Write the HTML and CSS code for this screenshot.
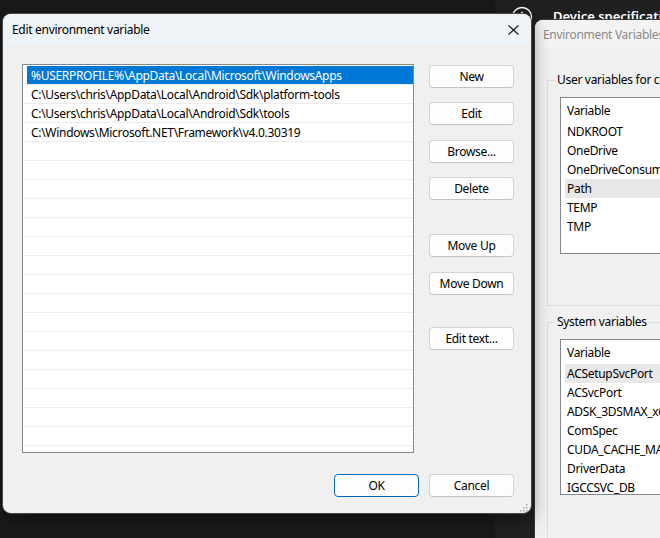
FILE: index.html
```html
<!DOCTYPE html>
<html>
<head>
<meta charset="utf-8">
<link rel="stylesheet" href="styles.css">
</head>
<body>
<div class="desk">
  <div class="bg-panel"></div>
  <svg class="info-icon" width="22" height="22" viewBox="0 0 22 22">
    <circle cx="11" cy="11" r="9.5" fill="none" stroke="#ffffff" stroke-width="1.4"/>
    <circle cx="11" cy="6.8" r="1.1" fill="#ffffff"/>
    <line x1="11" y1="10" x2="11" y2="16" stroke="#ffffff" stroke-width="1.4"/>
  </svg>
  <div class="bg-heading">Device specifications</div>

  <div class="env">
    <div class="env-title">Environment Variables</div>
    <div class="env-body">
      <fieldset class="group group-user">
        <legend>User variables for chris</legend>
        <div class="vlist vlist-user">
          <div class="vhead">Variable</div>
          <div class="vrow">NDKROOT</div>
          <div class="vrow">OneDrive</div>
          <div class="vrow">OneDriveConsumer</div>
          <div class="vrow hl">Path</div>
          <div class="vrow">TEMP</div>
          <div class="vrow">TMP</div>
        </div>
      </fieldset>
      <fieldset class="group group-sys">
        <legend>System variables</legend>
        <div class="vlist vlist-sys">
          <div class="vhead">Variable</div>
          <div class="vrow hl">ACSetupSvcPort</div>
          <div class="vrow">ACSvcPort</div>
          <div class="vrow">ADSK_3DSMAX_x64_2023</div>
          <div class="vrow">ComSpec</div>
          <div class="vrow">CUDA_CACHE_MAXSIZE</div>
          <div class="vrow">DriverData</div>
          <div class="vrow">IGCCSVC_DB</div>
        </div>
      </fieldset>
    </div>
  </div>

  <div class="dlg">
    <div class="dlg-title">
      <span>Edit environment variable</span>
      <svg class="close" width="11" height="10" viewBox="0 0 11 10">
        <line x1="0.5" y1="0.5" x2="10.5" y2="9.5" stroke="#1a1a1a" stroke-width="1.1"/>
        <line x1="10.5" y1="0.5" x2="0.5" y2="9.5" stroke="#1a1a1a" stroke-width="1.1"/>
      </svg>
    </div>
    <div class="dlg-body">
      <div class="plist">
        <div class="prow sel"><span class="cell">%USERPROFILE%\AppData\Local\Microsoft\WindowsApps</span></div>
        <div class="prow"><span class="cell">C:\Users\chris\AppData\Local\Android\Sdk\platform-tools</span></div>
        <div class="prow"><span class="cell">C:\Users\chris\AppData\Local\Android\Sdk\tools</span></div>
        <div class="prow"><span class="cell">C:\Windows\Microsoft.NET\Framework\v4.0.30319</span></div>
        <div class="prow"><span class="cell"></span></div>
        <div class="prow"><span class="cell"></span></div>
        <div class="prow"><span class="cell"></span></div>
        <div class="prow"><span class="cell"></span></div>
        <div class="prow"><span class="cell"></span></div>
        <div class="prow"><span class="cell"></span></div>
        <div class="prow"><span class="cell"></span></div>
        <div class="prow"><span class="cell"></span></div>
        <div class="prow"><span class="cell"></span></div>
        <div class="prow"><span class="cell"></span></div>
        <div class="prow"><span class="cell"></span></div>
        <div class="prow"><span class="cell"></span></div>
        <div class="prow"><span class="cell"></span></div>
        <div class="prow"><span class="cell"></span></div>
        <div class="prow"><span class="cell"></span></div>
        <div class="prow"><span class="cell"></span></div>
      </div>
      <div class="btn-col">
        <button class="btn">New</button>
        <button class="btn sp14">Edit</button>
        <button class="btn sp15">Browse...</button>
        <button class="btn sp14">Delete</button>
        <button class="btn sp34">Move Up</button>
        <button class="btn sp15">Move Down</button>
        <button class="btn sp32">Edit text...</button>
      </div>
    </div>
    <div class="dlg-foot">
      <button class="btn btn-primary">OK</button>
      <button class="btn">Cancel</button>
    </div>
    <svg class="grip" width="9" height="9" viewBox="0 0 9 9">
      <rect x="7" y="1" width="1.5" height="1.5" fill="#a6a6a6"/>
      <rect x="4" y="4" width="1.5" height="1.5" fill="#a6a6a6"/>
      <rect x="7" y="4" width="1.5" height="1.5" fill="#a6a6a6"/>
      <rect x="1" y="7" width="1.5" height="1.5" fill="#a6a6a6"/>
      <rect x="4" y="7" width="1.5" height="1.5" fill="#a6a6a6"/>
      <rect x="7" y="7" width="1.5" height="1.5" fill="#a6a6a6"/>
    </svg>
  </div>
</div>
</body>
</html>
```

FILE: styles.css
```css
* { box-sizing: border-box; }

html, body {
  margin: 0;
  padding: 0;
}

body {
  width: 660px;
  height: 538px;
  overflow: hidden;
  background: #1a1a1a;
  font-family: "Noto Sans", "DejaVu Sans", sans-serif;
  font-size: 12px;
  letter-spacing: -0.3px;
  color: #000;
}

.desk {
  position: relative;
  width: 660px;
  height: 538px;
  overflow: hidden;
}

.bg-panel {
  position: absolute;
  left: 495px;
  top: 0;
  width: 165px;
  height: 538px;
  background: #202020;
}

.info-icon {
  position: absolute;
  left: 511px;
  top: 6px;
}

.bg-heading {
  position: absolute;
  left: 553px;
  top: 10px;
  font-size: 13px;
  line-height: 13px;
  font-weight: 600;
  letter-spacing: 0;
  color: #ffffff;
  white-space: nowrap;
}

/* ---------- background window ---------- */
.env {
  position: absolute;
  left: 535px;
  top: 20px;
  width: 320px;
  height: 560px;
  background: #f0f0f0;
  border-radius: 8px 0 0 0;
  box-shadow: 0 0 0 1px #3a3a3a;
  overflow: hidden;
}

.env-title {
  height: 29px;
  padding-left: 8px;
  display: flex;
  align-items: center;
  color: #8a8a8a;
  background: #f3f3f3;
  white-space: nowrap;
}

.env-body {
  padding-left: 12px;
}

.group {
  border: 1px solid #dcdcdc;
  margin: 0;
  padding: 0 0 51px 12px;
  width: 320px;
  min-width: 0;
}

.group legend {
  margin-left: -5px;
  padding: 0 2px;
  line-height: 16px;
  white-space: nowrap;
}

.group-user { margin-top: 23px; }
.group-sys { margin-top: 8px; }

.vlist {
  margin-top: 9px;
  border: 1px solid #828790;
  background: #ffffff;
  width: 220px;
  overflow: hidden;
}

.vlist-user { height: 157px; }
.vlist-sys { height: 156px; }

.vhead {
  height: 24px;
  line-height: 25px;
  padding-left: 6px;
}

.vrow {
  height: 19px;
  line-height: 20px;
  margin-left: 4px;
  padding-left: 2px;
  white-space: nowrap;
}

.vrow.hl { background: #e8e8e8; }

/* ---------- dialog ---------- */
.dlg {
  position: absolute;
  left: 3px;
  top: 14px;
  width: 528px;
  height: 499px;
  background: #f0f0f0;
  border-radius: 8px;
  box-shadow: 0 0 0 1px #4a4a4a, 0 6px 18px rgba(0, 0, 0, 0.5);
  display: flex;
  flex-direction: column;
  overflow: hidden;
}

.dlg-title {
  height: 31px;
  flex: none;
  background: #eef3f8;
  display: flex;
  align-items: center;
  justify-content: space-between;
  padding: 0 12px 0 9px;
}

.close { display: block; }

.dlg-body {
  display: flex;
  padding: 19px 0 0 19px;
}

.plist {
  width: 392px;
  height: 389px;
  border: 1px solid #828790;
  background: #ffffff;
  padding-top: 1px;
  overflow: hidden;
}

.prow {
  height: 19px;
  margin-left: 1px;
  padding-left: 3px;
  border-bottom: 1px solid #ededed;
}

.cell {
  display: block;
  height: 18px;
  line-height: 20px;
  padding-left: 4px;
  white-space: nowrap;
}

.prow.sel .cell {
  background: #0078d7;
  color: #ffffff;
}

.btn-col {
  display: flex;
  flex-direction: column;
  margin: 1px 0 0 15px;
}

.btn {
  width: 85px;
  height: 23px;
  padding: 0;
  font-family: inherit;
  font-size: 12px;
  letter-spacing: -0.3px;
  color: #000;
  background: #fdfdfd;
  border: 1px solid #d3d3d3;
  border-bottom-color: #c4c4c4;
  border-radius: 4px;
  line-height: 20px;
  text-align: center;
}

.sp14 { margin-top: 14px; }
.sp15 { margin-top: 15px; }
.sp32 { margin-top: 32px; }
.sp34 { margin-top: 34px; }

.btn-primary {
  border: 1px solid #0067c0;
}

.dlg-foot {
  display: flex;
  justify-content: flex-end;
  gap: 10px;
  margin-top: 21px;
  padding-right: 17px;
}

.grip {
  position: absolute;
  right: 3px;
  bottom: 1px;
}
```
